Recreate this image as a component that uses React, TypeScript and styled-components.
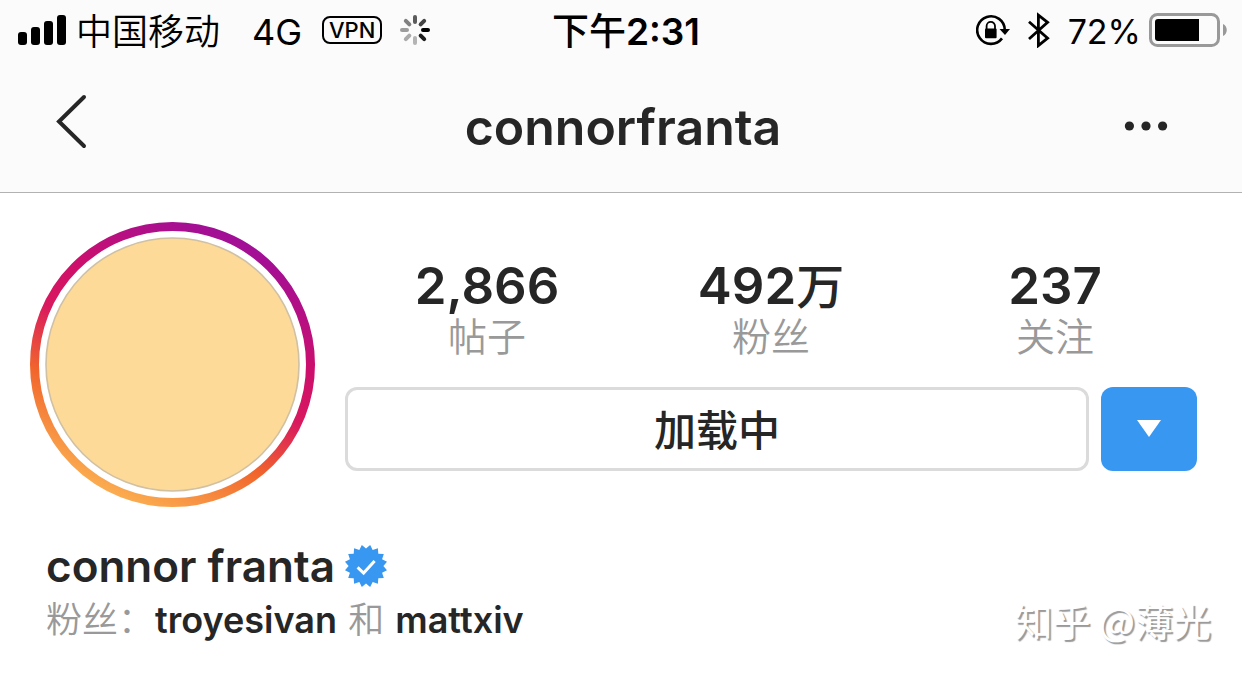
import React from "react";
import styled, { createGlobalStyle } from "styled-components";

const GlobalStyle = createGlobalStyle`
  *, *::before, *::after { box-sizing: border-box; }
  body {
    margin: 0;
    background: #ffffff;
    color: #262626;
    font-family: Inter, "Noto Sans CJK SC", sans-serif;
  }
  button { font: inherit; color: inherit; padding: 0; cursor: pointer; }
  h1, h2, p, dl, dt, dd { margin: 0; }
  svg { display: block; flex: none; }
`;

const TopArea = styled.header`
  background: #fbfbfb;
  border-bottom: 1px solid #b2b2b2;
`;

const StatusBar = styled.div`
  display: grid;
  grid-template-columns: 1fr auto 1fr;
  align-items: center;
  height: 60px;
  padding: 0 14px 0 18px;
  color: #000000;
  font-size: 36px;
  line-height: 56px;
`;

const StatusGroup = styled.div<{ $end?: boolean }>`
  display: flex;
  align-items: center;
  justify-content: ${(p) => (p.$end ? "flex-end" : "flex-start")};
  white-space: nowrap;
`;

const StatusText = styled.span`
  padding-top: 4px;
`;

const Carrier = styled(StatusText)`
  margin: 0 32px 0 9px;
  font-weight: 350;
`;

const Clock = styled.time`
  padding: 4px 0 0 6px;
  font-size: 37px;
  font-weight: 600;
`;

const ClockPeriod = styled.span`
  font-weight: 500;
`;

const VpnTag = styled.span`
  width: 60px;
  height: 28px;
  margin: 0 18px 0 20px;
  border: 2px solid #000000;
  border-radius: 8px;
  font-size: 22px;
  font-weight: 500;
  line-height: 24px;
  text-align: center;
`;

const StatusIcons = styled.span`
  display: flex;
  align-items: center;
  gap: 18px;
`;

const Percent = styled(StatusText)`
  margin: 0 8px 0 18px;
  font-size: 34px;
`;

const NavBar = styled.nav`
  display: grid;
  grid-template-columns: 1fr auto 1fr;
  align-items: center;
  height: 132px;
  padding: 0 48px 0 52px;
`;

const BackButton = styled.button`
  justify-self: start;
  padding-bottom: 8px;
  border: 0;
  background: none;
`;

const MoreButton = styled.button`
  justify-self: end;
  padding: 0 22px;
  border: 0;
  background: none;
`;

const Title = styled.h1`
  padding-top: 2px;
  font-size: 50px;
  font-weight: 600;
  line-height: 64px;
`;

const Profile = styled.main`
  padding: 29px 45px 0 30px;
`;

const Summary = styled.section`
  display: flex;
  gap: 30px;
`;

const StoryRing = styled.div`
  flex: none;
  width: 285px;
  height: 285px;
`;

const Details = styled.div`
  flex: 1;
  min-width: 0;
  padding-top: 36px;
`;

const Stats = styled.dl`
  display: grid;
  grid-template-columns: repeat(3, 1fr);
  text-align: center;
`;

const Stat = styled.div`
  display: flex;
  flex-direction: column-reverse;
`;

const StatValue = styled.dd`
  font-size: 51px;
  font-weight: 600;
  line-height: 56px;
`;

const StatUnit = styled.span`
  font-size: 48px;
  font-weight: 500;
  line-height: 48px;
`;

const StatLabel = styled.dt`
  color: #999999;
  font-size: 39px;
  font-weight: 350;
  line-height: 46px;
`;

const Actions = styled.div`
  display: flex;
  gap: 12px;
  margin-top: 27px;
`;

const FollowButton = styled.button`
  flex: 1;
  height: 84px;
  padding-bottom: 4px;
  border: 3px solid #dbdbdb;
  border-radius: 12px;
  background: #ffffff;
  font-size: 42px;
  font-weight: 500;
`;

const SuggestButton = styled.button`
  display: grid;
  place-items: center;
  width: 96px;
  height: 84px;
  border: 0;
  border-radius: 12px;
  background: #3897f0;
`;

const Bio = styled.section`
  padding: 30px 0 0 16px;
`;

const NameRow = styled.div`
  display: flex;
  align-items: center;
  gap: 10px;
`;

const Name = styled.h2`
  font-size: 44px;
  font-weight: 600;
  line-height: 58px;
`;

const BottomRow = styled.div`
  display: flex;
  align-items: center;
  justify-content: space-between;
  margin-right: -14px;
`;

const FollowedBy = styled.p`
  color: #999999;
  font-size: 36px;
  font-weight: 350;
  line-height: 50px;
`;

const UserLink = styled.a`
  margin: 0 1px;
  color: #262626;
  font-weight: 600;
  text-decoration: none;
`;

const Watermark = styled.span`
  color: #ffffff;
  font-family: "Noto Sans CJK SC", sans-serif;
  font-size: 38px;
  line-height: 50px;
  text-shadow: 2px 2px 1px #999999;
`;

const SignalIcon = () => (
  <svg width="49" height="30" aria-hidden="true">
    <rect x="0" y="17" width="9" height="13" rx="3" />
    <rect x="13" y="12" width="9" height="18" rx="3" />
    <rect x="26" y="6" width="9" height="24" rx="3" />
    <rect x="39" y="0" width="9" height="30" rx="3" />
  </svg>
);

const spokes = ["#5c5c5c", "#444444", "#000000", "#1c1c1c", "#b4b4b4", "#aaaaaa", "#9c9c9c", "#808080"];

const SpinnerIcon = () => (
  <svg width="30" height="30" viewBox="-15 -15 30 30" aria-hidden="true">
    {spokes.map((color, i) => (
      <line
        key={color}
        y1="-13"
        y2="-8"
        stroke={color}
        strokeWidth="4"
        strokeLinecap="round"
        transform={`rotate(${i * 45})`}
      />
    ))}
  </svg>
);

const RotationLockIcon = () => (
  <svg width="34" height="32" viewBox="977 14 34 32" aria-hidden="true">
    <path d="M1003 38.4A13.8 13.8 0 1 1 1005.8 30" fill="none" stroke="#000" strokeWidth="2.6" />
    <path d="M1000.5 29H1011l-5 6z" />
    <rect x="986" y="28.6" width="11.6" height="9.6" rx="1" />
    <path d="M987.6 29v-3a4.2 4.2 0 0 1 8.4 0v3" fill="none" stroke="#000" strokeWidth="1.8" />
  </svg>
);

const BluetoothIcon = () => (
  <svg width="22" height="36" viewBox="1029 12 22 36" aria-hidden="true">
    <path
      d="M1030 21.8L1048.6 38.2L1039.4 45.6V15.2L1048.6 22.4L1030 39"
      fill="none"
      stroke="#000"
      strokeWidth="2.8"
    />
  </svg>
);

const BatteryIcon = () => (
  <svg width="79" height="34" aria-hidden="true">
    <rect x="1.5" y="1.5" width="68" height="31" rx="7" fill="none" stroke="#999999" strokeWidth="3" />
    <path d="M9 6H50V28H9a3 3 0 0 1-3-3V9a3 3 0 0 1 3-3z" />
    <path d="M74 11c5 2 5 10 0 12z" fill="#999999" />
  </svg>
);

const Avatar = () => (
  <svg width="285" height="285" viewBox="0 0 285 285" role="img" aria-label="connorfranta">
    <defs>
      <linearGradient id="story" gradientUnits="userSpaceOnUse" x1="82" y1="272" x2="203" y2="13">
        <stop offset="0" stopColor="#fbad50" />
        <stop offset="0.28" stopColor="#f1652c" />
        <stop offset="0.5" stopColor="#d9195e" />
        <stop offset="0.68" stopColor="#cd0f6c" />
        <stop offset="1" stopColor="#a00f98" />
      </linearGradient>
    </defs>
    <circle cx="142.5" cy="142.5" r="138" fill="none" stroke="url(#story)" strokeWidth="9" />
    <circle cx="142.5" cy="142.5" r="126.5" fill="#fdda98" stroke="#d0c0a4" strokeWidth="1.6" />
  </svg>
);

const BADGE_TIPS = 16;

const badgePoints = Array.from({ length: BADGE_TIPS * 2 }, (_, i) => {
  const radius = i % 2 ? 17.4 : 21.4;
  const angle = ((i + 1) * Math.PI) / BADGE_TIPS;
  return `${(21 + radius * Math.sin(angle)).toFixed(2)},${(21 - radius * Math.cos(angle)).toFixed(2)}`;
}).join(" ");

const VerifiedBadge = () => (
  <svg width="42" height="42" role="img" aria-label="已验证">
    <polygon points={badgePoints} fill="#3897f0" />
    <path d="M12.6 22.4l6 5.6 11-12" fill="none" stroke="#fff" strokeWidth="3" />
  </svg>
);

const stats = [
  { label: "帖子", value: "2,866", unit: "" },
  { label: "粉丝", value: "492", unit: "万" },
  { label: "关注", value: "237", unit: "" },
];

export default function App() {
  return (
    <>
      <GlobalStyle />
      <TopArea>
        <StatusBar>
          <StatusGroup>
            <SignalIcon />
            <Carrier>中国移动</Carrier>
            <StatusText>4G</StatusText>
            <VpnTag>VPN</VpnTag>
            <SpinnerIcon />
          </StatusGroup>
          <Clock>
            <ClockPeriod>下午</ClockPeriod>2:31
          </Clock>
          <StatusGroup $end>
            <StatusIcons>
              <RotationLockIcon />
              <BluetoothIcon />
            </StatusIcons>
            <Percent>72%</Percent>
            <BatteryIcon />
          </StatusGroup>
        </StatusBar>
        <NavBar>
          <BackButton aria-label="返回">
            <svg width="36" height="60" viewBox="52 92 36 60" aria-hidden="true">
              <path d="M84 97L59 121.5L84 146" fill="none" stroke="#262626" strokeWidth="4" strokeLinecap="round" />
            </svg>
          </BackButton>
          <Title>connorfranta</Title>
          <MoreButton aria-label="更多选项">
            <svg width="48" height="20" viewBox="0 0 48 20" fill="#262626" aria-hidden="true">
              <circle cx="5.4" cy="10" r="4.6" />
              <circle cx="22" cy="10" r="4.6" />
              <circle cx="38.6" cy="10" r="4.6" />
            </svg>
          </MoreButton>
        </NavBar>
      </TopArea>
      <Profile>
        <Summary>
          <StoryRing>
            <Avatar />
          </StoryRing>
          <Details>
            <Stats>
              {stats.map((stat) => (
                <Stat key={stat.label}>
                  <StatLabel>{stat.label}</StatLabel>
                  <StatValue>
                    {stat.value}
                    {stat.unit && <StatUnit>{stat.unit}</StatUnit>}
                  </StatValue>
                </Stat>
              ))}
            </Stats>
            <Actions>
              <FollowButton>加载中</FollowButton>
              <SuggestButton aria-label="推荐用户">
                <svg width="24" height="18" aria-hidden="true">
                  <path d="M0 0H24L12 17z" fill="#fff" />
                </svg>
              </SuggestButton>
            </Actions>
          </Details>
        </Summary>
        <Bio>
          <NameRow>
            <Name>connor franta</Name>
            <VerifiedBadge />
          </NameRow>
          <BottomRow>
            <FollowedBy>
              粉丝：<UserLink href="#troyesivan">troyesivan</UserLink> 和{" "}
              <UserLink href="#mattxiv">mattxiv</UserLink>
            </FollowedBy>
            <Watermark>知乎 @薄光</Watermark>
          </BottomRow>
        </Bio>
      </Profile>
    </>
  );
}
